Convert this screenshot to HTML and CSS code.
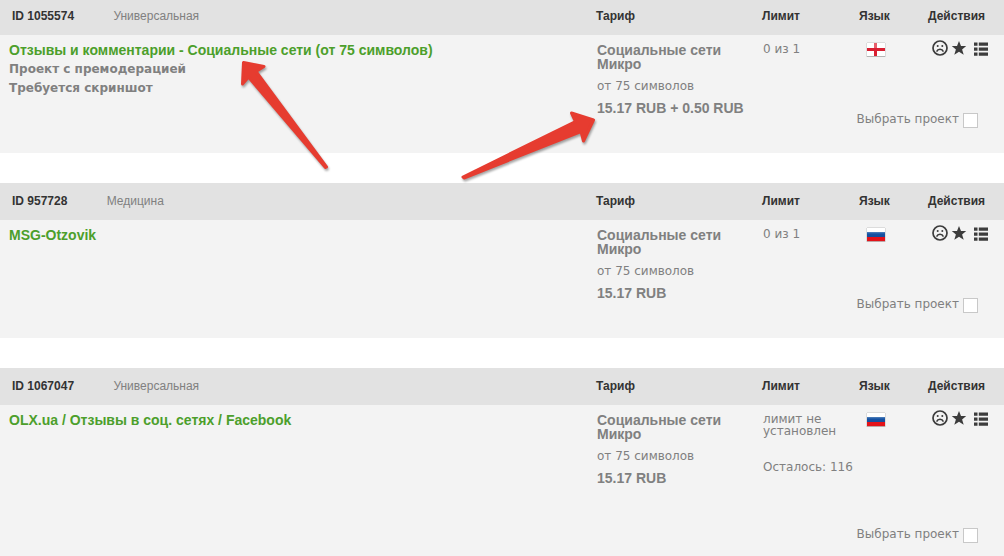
FILE: index.html
```html
<!DOCTYPE html>
<html lang="ru">
<head>
<meta charset="utf-8">
<title>Проекты</title>
<link rel="stylesheet" href="styles.css">
</head>
<body>
<svg class="defs" aria-hidden="true">
  <linearGradient id="blue" x2="0" y2="1"><stop offset="0" stop-color="#5585bd"/><stop offset=".4" stop-color="#1552a3"/><stop offset="1" stop-color="#164c9b"/></linearGradient>
  <symbol id="flag-en" viewBox="0 0 20 16">
    <rect x="1" y="1" width="18" height="14" fill="#c9c9c9"/>
    <rect x="1" y="1" width="18" height="13" fill="#fff"/>
    <path d="M8 1h3v13H8zM1 6h18v3H1z" fill="#d91f32"/>
    <path d="M8 1h3v5H8z" fill="#e65f6b"/>
    <path d="M.5 1v14M19.5 1v14M1 .5h18" stroke="#dcdcdc"/>
    <path d="M1 14.5h18" stroke="#b5b5b5"/>
  </symbol>
  <symbol id="flag-ru" viewBox="0 0 20 16">
    <rect x="1" y="1" width="18" height="5" fill="#fff"/>
    <rect x="1" y="5" width="18" height="5" fill="url(#blue)"/>
    <rect x="1" y="10" width="18" height="4" fill="#e31219"/>
    <path d="M.5 1v14M19.5 1v14M1 .5h18" stroke="#dcdcdc"/>
    <path d="M1 14.5h18" stroke="#bda5a5"/>
  </symbol>
  <symbol id="sad" viewBox="0 0 16 16">
    <circle cx="8" cy="8" r="7" fill="none" stroke="#3c3c3c" stroke-width="1.7"/>
    <circle cx="5.7" cy="6" r="1" fill="#3c3c3c"/><circle cx="10.3" cy="6" r="1" fill="#3c3c3c"/>
    <path d="M4.6 11.6C5.8 8.6 10.2 8.6 11.4 11.6" fill="none" stroke="#3c3c3c" stroke-width="1.5"/>
  </symbol>
  <symbol id="star" viewBox="0 0 16 16">
    <path d="M8 1l2 5h5.200l-4.100 3.400 1.600 5.400L8 11.700l-4.700 3.100 1.600-5.400L.8 6H6z" fill="#3c3c3c"/>
  </symbol>
  <symbol id="list" viewBox="0 0 14 14">
    <path d="M0 .5h3.500v3.200H0zM4.800.5H14v3.200H4.800zM0 5.500h3.500v3.200H0zM4.800 5.500H14v3.200H4.800zM0 10.500h3.500v3.200H0zM4.800 10.500H14v3.200H4.800z" fill="#3c3c3c"/>
  </symbol>
</svg>
<main class="projects">
  <table class="project">
    <colgroup><col><col class="c-tariff"><col class="c-limit"><col class="c-lang"><col class="c-act"></colgroup>
    <thead><tr>
      <th class="id">ID 1055574 <span class="category">Универсальная</span></th>
      <th>Тариф</th><th>Лимит</th><th>Язык</th><th>Действия</th>
    </tr></thead>
    <tbody>
      <tr class="info">
        <td rowspan="2" class="about"><a class="title" href="#p1">Отзывы и комментарии - Социальные сети (от 75 символов)</a>
          <p class="note">Проект с премодерацией</p><p class="note">Требуется скриншот</p></td>
        <td rowspan="2" class="tariff"><p class="plan">Социальные сети Микро</p><p class="size">от 75 символов</p><p class="price">15.17 RUB + 0.50 RUB</p></td>
        <td rowspan="2" class="limit"><p>0 из 1</p></td>
        <td class="lang"><svg class="flag" role="img" aria-label="Английский"><use href="#flag-en"/></svg></td>
        <td class="actions"><div class="buttons"><button aria-label="Скрыть"><svg><use href="#sad"/></svg></button><button aria-label="В избранное"><svg><use href="#star"/></svg></button><button class="menu" aria-label="Подробнее"><svg><use href="#list"/></svg></button></div></td>
      </tr>
      <tr><td colspan="2" class="pick"><label>Выбрать проект <input type="checkbox"></label></td></tr>
    </tbody>
  </table>
  <table class="project">
    <colgroup><col><col class="c-tariff"><col class="c-limit"><col class="c-lang"><col class="c-act"></colgroup>
    <thead><tr>
      <th class="id">ID 957728 <span class="category">Медицина</span></th>
      <th>Тариф</th><th>Лимит</th><th>Язык</th><th>Действия</th>
    </tr></thead>
    <tbody>
      <tr class="info">
        <td rowspan="2" class="about"><a class="title" href="#p2">MSG-Otzovik</a></td>
        <td rowspan="2" class="tariff"><p class="plan">Социальные сети Микро</p><p class="size">от 75 символов</p><p class="price">15.17 RUB</p></td>
        <td rowspan="2" class="limit"><p>0 из 1</p></td>
        <td class="lang"><svg class="flag" role="img" aria-label="Русский"><use href="#flag-ru"/></svg></td>
        <td class="actions"><div class="buttons"><button aria-label="Скрыть"><svg><use href="#sad"/></svg></button><button aria-label="В избранное"><svg><use href="#star"/></svg></button><button class="menu" aria-label="Подробнее"><svg><use href="#list"/></svg></button></div></td>
      </tr>
      <tr><td colspan="2" class="pick"><label>Выбрать проект <input type="checkbox"></label></td></tr>
    </tbody>
  </table>
  <table class="project last">
    <colgroup><col><col class="c-tariff"><col class="c-limit"><col class="c-lang"><col class="c-act"></colgroup>
    <thead><tr>
      <th class="id">ID 1067047 <span class="category">Универсальная</span></th>
      <th>Тариф</th><th>Лимит</th><th>Язык</th><th>Действия</th>
    </tr></thead>
    <tbody>
      <tr class="info">
        <td rowspan="2" class="about"><a class="title" href="#p3">OLX.ua / Отзывы в соц. сетях / Facebook</a></td>
        <td rowspan="2" class="tariff"><p class="plan">Социальные сети Микро</p><p class="size">от 75 символов</p><p class="price">15.17 RUB</p></td>
        <td rowspan="2" class="limit"><p>лимит не установлен</p><p class="left">Осталось: 116</p></td>
        <td class="lang"><svg class="flag" role="img" aria-label="Русский"><use href="#flag-ru"/></svg></td>
        <td class="actions"><div class="buttons"><button aria-label="Скрыть"><svg><use href="#sad"/></svg></button><button aria-label="В избранное"><svg><use href="#star"/></svg></button><button class="menu" aria-label="Подробнее"><svg><use href="#list"/></svg></button></div></td>
      </tr>
      <tr><td colspan="2" class="pick"><label>Выбрать проект <input type="checkbox"></label></td></tr>
    </tbody>
  </table>
</main>
<svg class="arrow arrow-title" viewBox="240 58 92 116" aria-hidden="true">
  <path d="M243.500 62.500L264 66.500L256 71.500L326.500 167L325.500 167.500L248.500 77L242.500 84Z"/>
</svg>
<svg class="arrow arrow-price" viewBox="458 106 142 78" aria-hidden="true">
  <path d="M593.500 120L571.500 113L575.500 121.500L463 177L464 178L581 131.500L583.500 141Z"/>
</svg>
</body>
</html>
```

FILE: styles.css
```css
body {
  display: flow-root;
  margin: 0;
  position: relative;
  background: #fff;
  color: #808080;
  font-family: "DejaVu Sans", Verdana, sans-serif;
  font-size: 12px;
  line-height: 12px;
}
p { margin: 0; }
.defs { position: absolute; width: 0; height: 0; }

.projects {
  display: flex;
  flex-direction: column;
  gap: 30px;
  margin-top: -2px;
}
.project {
  width: 100%;
  table-layout: fixed;
  border-collapse: collapse;
  background: #f3f3f3;
}
.c-tariff { width: 166px; }
.c-limit { width: 97px; }
.c-lang { width: 69px; }
.c-act { width: 76px; }

th {
  height: 35px;
  padding: 0 0 2px;
  background: #e2e2e2;
  color: #333;
  font: bold 12px/16px "Liberation Sans", Arial, sans-serif;
  text-align: left;
}
.id { padding-left: 12px; }
.category {
  margin-left: 36px;
  color: #808080;
  font-weight: normal;
}

td {
  padding: 0;
  vertical-align: top;
}
.info { height: 60px; }
.about { padding: 6px 0 0 9px; }
.title {
  display: block;
  margin-bottom: 1px;
  color: #4c9f2b;
  font: bold 14px/18px "Liberation Sans", Arial, sans-serif;
  text-decoration: none;
}
.note {
  font-weight: bold;
  line-height: 19px;
}
.tariff { padding: 8px 24px 0 1px; }
.plan, .price { font: bold 14px/14px "Liberation Sans", Arial, sans-serif; }
.plan { margin-bottom: 9px; }
.size { margin-bottom: 9px; }
.tariff .price { white-space: nowrap; }
.limit { padding: 8px 0 0 1px; }
.left {
  margin-top: 24px;
  white-space: nowrap;
}
.lang { padding: 7px 0 0 7px; }
.flag {
  display: block;
  width: 20px;
  height: 16px;
}
.actions { padding: 5px 0 0 4px; }
.buttons {
  display: flex;
  align-items: flex-end;
  gap: 3px;
}
.buttons button {
  padding: 0;
  border: 0;
  background: none;
  cursor: pointer;
}
.buttons svg {
  display: block;
  width: 16px;
  height: 16px;
}
.buttons .menu { margin-left: 4px; }
.buttons .menu svg {
  width: 14px;
  height: 14px;
}
.pick {
  height: 33px;
  padding: 0 26px 25px 0;
  vertical-align: bottom;
}
.pick label {
  display: flex;
  justify-content: flex-end;
  align-items: flex-start;
  gap: 4px;
  line-height: 13px;
  white-space: nowrap;
}
.pick input {
  appearance: none;
  flex: none;
  box-sizing: border-box;
  width: 15px;
  height: 15px;
  margin: 0;
  border: 1px solid #c8c8c8;
  background: #fff;
}
.pick input:checked { background: #4c9f2b; }
.last .info { height: 105px; }
.last .pick { padding-bottom: 13px; }

.arrow {
  position: absolute;
  fill: #e63c30;
  stroke: #e63c30;
  stroke-width: 3;
  stroke-linejoin: round;
  filter: drop-shadow(1px 2px 1px rgba(0, 0, 0, .35));
  pointer-events: none;
}
.arrow-title {
  left: 240px;
  top: 58px;
  width: 92px;
  height: 116px;
}
.arrow-price {
  left: 458px;
  top: 106px;
  width: 142px;
  height: 78px;
}
```
